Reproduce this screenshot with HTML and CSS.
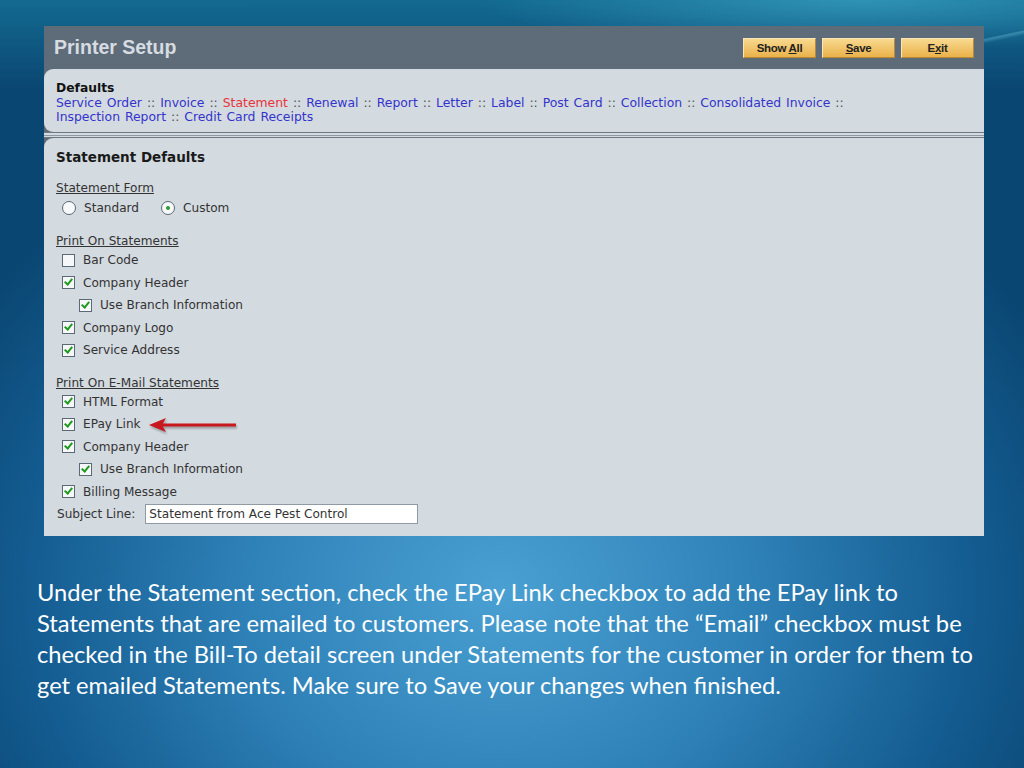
FILE: index.html
```html
<!DOCTYPE html>
<html lang="en">
<head>
  <meta charset="UTF-8" />
  <title>Printer Setup - Statement Defaults</title>
  <link rel="stylesheet" href="styles.css">
</head>
<body>

<div class="slide">
  <div class="shot">
    <div class="topbar">
      <h1>Printer Setup</h1>
      <div class="actions">
        <button>Show <u>A</u>ll</button>
        <button><u>S</u>ave</button>
        <button>E<u>x</u>it</button>
      </div>
    </div>

    <div class="defaults">
      <h3>Defaults</h3>
      <div class="links">
        <a>Service Order</a> :: <a>Invoice</a> :: <a class="current">Statement</a> :: <a>Renewal</a> :: <a>Report</a> :: <a>Letter</a> :: <a>Label</a> :: <a>Post Card</a> :: <a>Collection</a> :: <a>Consolidated Invoice</a> ::<br>
        <a>Inspection Report</a> :: <a>Credit Card Receipts</a>
      </div>
    </div>

    <div class="divider"></div>

    <div class="statement">
      <h2>Statement Defaults</h2>

      <div class="group-title">Statement Form</div>
      <div class="radios">
        <span class="opt"><span class="radio"></span>Standard</span>
        <span class="opt"><span class="radio on"></span>Custom</span>
      </div>

      <div class="group-title">Print On Statements</div>
      <div class="row"><span class="box"></span>Bar Code</div>
      <div class="row"><span class="box on"></span>Company Header</div>
      <div class="row sub"><span class="box on"></span>Use Branch Information</div>
      <div class="row"><span class="box on"></span>Company Logo</div>
      <div class="row"><span class="box on"></span>Service Address</div>

      <div class="group-title">Print On E-Mail Statements</div>
      <div class="row"><span class="box on"></span>HTML Format</div>
      <div class="row epay"><span class="box on"></span>EPay Link
        <svg class="arrow" width="96" height="16" viewBox="0 0 96 16">
          <line x1="14" y1="8" x2="88" y2="8" stroke="#c8171d" stroke-width="3"/>
          <polygon points="1,8 18,1 14,8 18,15" fill="#c8171d"/>
        </svg>
      </div>
      <div class="row"><span class="box on"></span>Company Header</div>
      <div class="row sub"><span class="box on"></span>Use Branch Information</div>
      <div class="row"><span class="box on"></span>Billing Message</div>

      <div class="subject">
        <label>Subject Line:</label>
        <input type="text" value="Statement from Ace Pest Control">
      </div>
    </div>
  </div>

  <p class="note">Under the Statement section, check the EPay Link checkbox to add the EPay link to<br>
  Statements that are emailed to customers. Please note that the “Email” checkbox must be<br>
  checked in the Bill-To detail screen under Statements for the customer in order for them to<br>
  get emailed Statements. Make sure to Save your changes when finished.</p>
</div>

</body>
</html>
```

FILE: styles.css
```css
body {
  margin: 0;
  padding: 0;
  font-family: 'DejaVu Sans', Verdana, sans-serif;
}

.slide {
  width: 1024px;
  height: 768px;
  overflow: hidden;
  padding-top: 26px;
  box-sizing: border-box;
  background:
    linear-gradient(168deg, transparent 0, transparent 70%, rgba(120, 205, 230, 0.35) 71%, transparent 74%, transparent 100%) right top / 300px 70px no-repeat,
    radial-gradient(ellipse 380px 50px at 860px 0, rgba(70, 180, 210, 0.55) 0%, rgba(70, 180, 210, 0) 100%),
    linear-gradient(to bottom, rgba(25, 130, 165, 0.6) 0, rgba(25, 130, 165, 0) 90px),
    radial-gradient(ellipse 620px 520px at 500px 590px, #4aa0d2 0%, #2f82b8 40%, #145d92 75%, #0a4672 100%),
    #0b4a76;
}

.shot {
  margin-left: 44px;
  width: 940px;
  height: 510px;
  background: #5e6b79;
}

.topbar {
  height: 42px;
  display: flex;
  justify-content: space-between;
  align-items: center;
  padding: 0 10px;
}

.topbar h1 {
  margin: 0;
  font-family: 'Liberation Sans', Arial, sans-serif;
  font-size: 19.5px;
  font-weight: bold;
  color: #d6dce2;
}

.actions {
  display: flex;
  gap: 6px;
  margin-top: 1px;
}

.actions button {
  width: 73px;
  height: 20px;
  padding: 0;
  border: 1px solid #f8e6b8;
  border-right-color: #b98a35;
  border-bottom-color: #b98a35;
  background: linear-gradient(#f8d98f, #eab24a);
  font-family: 'Liberation Sans', Arial, sans-serif;
  font-size: 11.5px;
  font-weight: bold;
  color: #222;
  letter-spacing: -0.3px;
}

.defaults {
  background: #d3dae0;
  border-radius: 9px 0 0 9px;
  margin-top: 1px;
  height: 63px;
  padding: 12px 12px 0;
  box-sizing: border-box;
}

h3 {
  margin: 0;
  font-size: 12.3px;
  font-weight: bold;
  color: #111;
  line-height: 15px;
}

.links {
  font-size: 12.4px;
  line-height: 14px;
  word-spacing: 1px;
  color: #555;
}

.links a {
  color: #3434cc;
}

.links a.current {
  color: #e8343a;
}

.divider {
  height: 6px;
  background: #d3dae0;
  border-top: 1px solid #6d7783;
  border-bottom: 1px solid #6d7783;
  box-sizing: border-box;
}

.divider::after {
  content: "";
  display: block;
  height: 1px;
  margin-top: 2px;
  background: #8e98a3;
}

.statement {
  background: #d3dae0;
  border-radius: 9px 0 0 0;
  height: 398px;
  padding: 11px 12px 0;
  box-sizing: border-box;
  font-size: 12.1px;
  color: #333;
}

h2 {
  margin: 0 0 15px;
  font-size: 13.5px;
  font-weight: bold;
  color: #1a1a1a;
  line-height: 16px;
}

.group-title {
  text-decoration: underline;
  line-height: 16px;
  margin-top: 13px;
}

h2 + .group-title {
  margin-top: 0;
}

.radios {
  display: flex;
  gap: 22px;
  height: 24px;
  align-items: center;
  padding-left: 6px;
}

.opt {
  display: flex;
  align-items: center;
  gap: 8px;
}

.radio {
  width: 12px;
  height: 12px;
  border: 1px solid #5b6876;
  border-radius: 50%;
  background: #f8f9fa;
  position: relative;
}

.radio.on::after {
  content: "";
  position: absolute;
  left: 4px;
  top: 4px;
  width: 4px;
  height: 4px;
  border-radius: 50%;
  background: #2a9c2a;
}

.row {
  display: flex;
  align-items: center;
  gap: 8px;
  height: 22.5px;
  padding-left: 6px;
  position: relative;
}

.row.sub {
  padding-left: 23px;
}

.box {
  width: 11px;
  height: 11px;
  border: 1px solid #5b6876;
  background: #f6f7f8;
  position: relative;
}

.box.on::after {
  content: "";
  position: absolute;
  left: 3px;
  top: 0;
  width: 3px;
  height: 6px;
  border: solid #1f9a1f;
  border-width: 0 2px 2px 0;
  transform: rotate(40deg);
}

.arrow {
  position: absolute;
  left: 92px;
  top: 4px;
  filter: drop-shadow(1px 2px 1px rgba(0, 0, 0, 0.3));
}

.subject {
  display: flex;
  align-items: center;
  gap: 10px;
  margin-top: 0.5px;
  padding-left: 1px;
}

.subject label {
  font-size: 12.1px;
}

.subject input {
  width: 273px;
  height: 20px;
  box-sizing: border-box;
  border: 1px solid #8f9aa5;
  padding: 0 3px;
  font-family: 'DejaVu Sans', Verdana, sans-serif;
  font-size: 12.1px;
  color: #333;
  background: #fff;
}

.note {
  margin: 41px 0 0 37px;
  width: 985px;
  font-family: Lato, 'Open Sans', sans-serif;
  font-size: 23.7px;
  line-height: 31px;
  color: #fff;
}
```
